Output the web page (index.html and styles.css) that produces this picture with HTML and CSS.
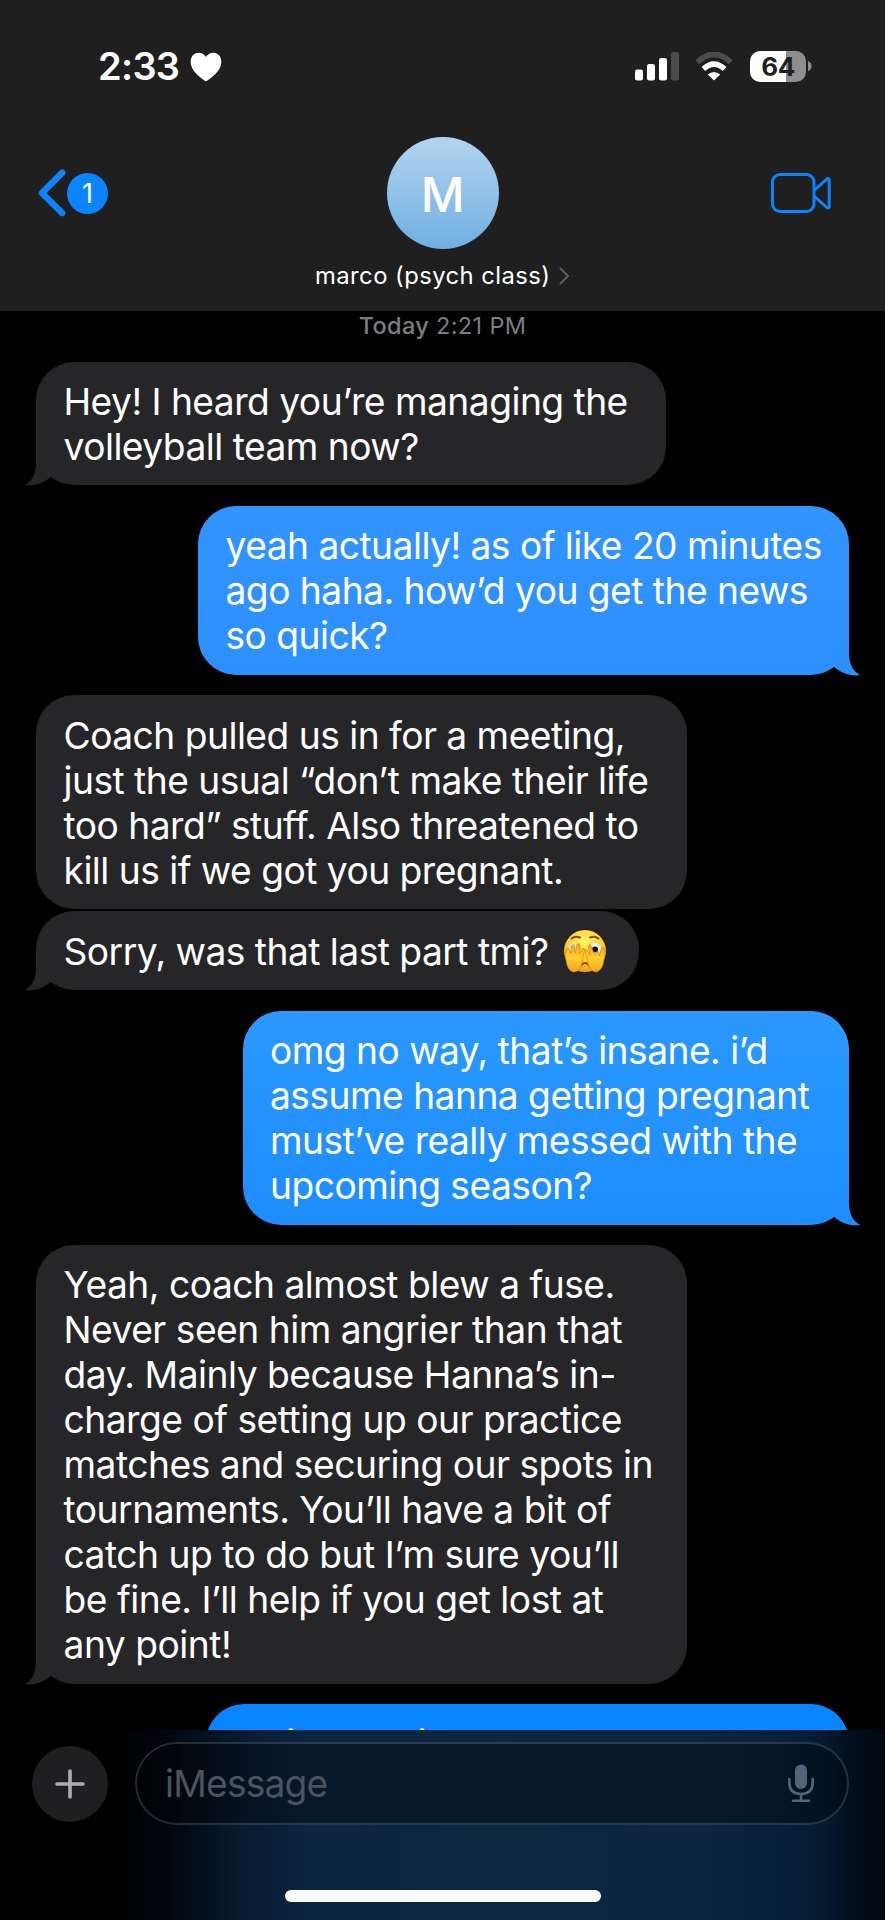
FILE: index.html
```html
<!DOCTYPE html>
<html lang="en">
<head>
<meta charset="utf-8">
<title>Messages</title>
<link rel="stylesheet" href="styles.css">
</head>
<body>
<svg width="0" height="0" class="defs"><symbol id="hook" viewBox="0 0 40 42"><path d="M12 0V18C12 30 7 37 .5 40C10 41.500 20 38.500 27.300 31.500L32 16Z" fill="currentColor"/></symbol></svg>
<div class="phone">
  <header class="header">
    <div class="status">
      <div class="clock"><span class="time">2:33</span>
        <svg width="32" height="30" viewBox="0 0 32 30"><path d="M16 29.500C13 27.200.7 20 .7 10 .7 4.500 4 .8 8.500.8 12 .8 14.700 2.400 16 5 17.300 2.400 20 .8 23.500.8 28 .8 31.300 4.500 31.300 10 31.300 20 19 27.200 16 29.500Z" fill="#fff"/></svg>
      </div>
      <div class="indicators">
        <svg width="44" height="29" viewBox="0 0 44 29"><g fill="#fff"><rect y="17.500" width="8" height="11" rx="2.300"/><rect x="12" y="12" width="8" height="16.500" rx="2.300"/><rect x="24" y="6" width="8" height="22.500" rx="2.300"/></g><rect x="36" width="8" height="28.500" rx="2.300" fill="#4c4c4d"/></svg>
        <svg class="wifi" width="38" height="29" viewBox="0 0 38 29" fill="none"><path d="M2.300 10.200Q19-5.600 35.700 10.200" stroke="#4c4c4d" stroke-width="5.600"/><path d="M8.400 17Q19 7.200 29.600 17" stroke="#fff" stroke-width="5.400"/><path d="M12.800 22.600Q19 17.400 25.200 22.600L19 28.500Z" fill="#fff"/></svg>
        <div class="battery">64</div>
        <svg class="cap" width="4" height="12" viewBox="0 0 4 12"><path d="M0 1Q3.600 2.500 3.600 6T0 11Z" fill="#8e8e8f"/></svg>
      </div>
    </div>
    <div class="nav">
      <div class="back">
        <svg width="28" height="48" viewBox="0 0 28 48" fill="none" stroke="#0a84ff" stroke-width="6.500" stroke-linecap="round" stroke-linejoin="round"><path d="M24.200 3.600 4 24 24.200 44"/></svg>
        <span class="count">1</span>
      </div>
      <div class="avatar">M</div>
      <svg class="video" width="60" height="40" viewBox="0 0 60 40" fill="none" stroke="#0a84ff" stroke-width="3" stroke-linejoin="round"><rect x="1.500" y="1.500" width="41.500" height="37" rx="7.500"/><path d="M43.500 17 55.500 6.300Q58.200 4.200 58.200 7.500V33Q58.200 36.300 55.500 34.200L43.500 23.500"/></svg>
    </div>
    <div class="contact"><span>marco (psych class)</span>
      <svg width="11" height="18" viewBox="0 0 11 18" fill="none" stroke="#5f5f61" stroke-width="2" stroke-linecap="round" stroke-linejoin="round"><path d="M1.500 1.500 9 9 1.500 16.500"/></svg>
    </div>
  </header>

  <main class="thread">
    <div class="stamp"><b>Today</b> 2:21 PM</div>
    <div class="bubble in b1">Hey! I heard you’re managing the<br>volleyball team now?<svg class="hook"><use href="#hook"/></svg></div>
    <div class="bubble out b2">yeah actually! as of like 20 minutes<br>ago haha. how’d you get the news<br>so quick?<svg class="hook"><use href="#hook"/></svg></div>
    <div class="bubble in b3">Coach pulled us in for a meeting,<br>just the usual “don’t make their life<br>too hard” stuff. Also threatened to<br>kill us if we got you pregnant.</div>
    <div class="bubble in b4">Sorry, was that last part tmi?
      <svg class="emoji" width="44" height="44" viewBox="0 0 44 44">
        <defs>
          <radialGradient id="face" cx=".5" cy=".3" r=".75"><stop offset="0" stop-color="#fff36b"/><stop offset=".55" stop-color="#fdd131"/><stop offset="1" stop-color="#f08f12"/></radialGradient>
          <linearGradient id="hand" x2="0" y2="1"><stop offset="0" stop-color="#f2a51e"/><stop offset=".5" stop-color="#ffcf2e"/><stop offset="1" stop-color="#f7a51c"/></linearGradient>
        </defs>
        <circle cx="22" cy="22" r="21" fill="url(#face)"/>
        <path d="M8.500 9.500Q12 6.500 17 8.500M27 8.500Q32 6.500 35.500 9.500" fill="none" stroke="#8a4b0c" stroke-width="2" stroke-linecap="round"/>
        <ellipse cx="10.500" cy="20" rx="5.500" ry="6" fill="#e8e4df"/><ellipse cx="32.500" cy="19.500" rx="6" ry="5.500" fill="#f4f1ec"/>
        <circle cx="32" cy="20.500" r="3" fill="#1d1009"/>
        <path d="M17 37Q22 31 27 37" fill="none" stroke="#8a4b0c" stroke-width="2"/>
        <g stroke="#d98212" stroke-width=".7" fill="url(#hand)">
          <path d="M3 30Q1 24 3.500 20 5.500 18 6.500 21L8 25 8.500 17Q10 14 11.500 17L12.300 24 14 15.500Q16 13 17.200 16.500L16.500 25 19.500 19.500Q21.500 18 21.500 21.500L19 34Q17 43 10.500 43 4 42 3 30Z"/>
          <path d="M41 30Q43 24 41 19 39 17 38.200 20L36.500 27 35.500 23Q34 21 33.500 24L31.500 26 28 17Q26 14 25.500 17.500L27 26 23.500 20.500Q21 20 22.500 24L25 35Q28 43 33.500 43 40 41 41 30Z"/>
        </g>
      </svg><svg class="hook"><use href="#hook"/></svg></div>
    <div class="bubble out b5">omg no way, that’s insane. i’d<br>assume hanna getting pregnant<br>must’ve really messed with the<br>upcoming season?<svg class="hook"><use href="#hook"/></svg></div>
    <div class="bubble in b6">Yeah, coach almost blew a fuse.<br>Never seen him angrier than that<br>day. Mainly because Hanna’s in-<br>charge of setting up our practice<br>matches and securing our spots in<br>tournaments. You’ll have a bit of<br>catch up to do but I’m sure you’ll<br>be fine. I’ll help if you get lost at<br>any point!<svg class="hook"><use href="#hook"/></svg></div>
    <div class="bubble out b7">oh i guess i’ll be okay somehow</div>
  </main>

  <footer class="composer">
    <div class="entry">
      <div class="add"><svg width="30" height="30" viewBox="0 0 30 30" stroke="#adadaf" stroke-width="3.600" stroke-linecap="round"><path d="M15 2V28M2 15H28"/></svg></div>
      <div class="field"><span>iMessage</span>
        <svg width="26" height="39" viewBox="0 0 26 39" fill="none" stroke="#52637a" stroke-width="2.600" stroke-linecap="round"><rect x="7" y=".5" width="12" height="24.500" rx="6" fill="#52637a" stroke="none"/><path d="M1.300 15V18.500Q1.300 30 13 30T24.700 18.500V15M13 30V36.500M5 36.800H21"/></svg>
      </div>
    </div>
    <div class="home"></div>
  </footer>
</div>
</body>
</html>
```
FILE: styles.css
```css
body { margin: 0; background: #000; color: #fff; font-family: Inter, "Liberation Sans", sans-serif; }
svg { display: block; flex: none; }
.defs { position: absolute; }
.phone { width: 885px; height: 1920px; overflow: hidden; display: flex; flex-direction: column; background: #000; }

.header { flex: none; height: 311px; box-sizing: border-box; background: #1f1f1f; padding-top: 44px; }
.status { display: flex; justify-content: space-between; align-items: center; height: 44px; padding: 0 73px 0 98px; }
.clock { display: flex; align-items: center; gap: 10.500px; }
.clock svg { margin-top: 2px; }
.time { font-size: 38px; font-weight: 600; line-height: 44px; letter-spacing: -0.7px; }
.indicators { display: flex; align-items: center; }
.wifi { margin-left: 16px; }
.battery { margin-left: 17px; width: 56px; height: 31px; border-radius: 10px; background: linear-gradient(90deg, #fff 64%, #8e8e8f 64%); color: #1f1f1f; font-size: 26px; font-weight: 700; line-height: 31px; text-align: center; letter-spacing: -0.5px; }
.cap { margin-left: 2px; }
.nav { display: grid; grid-template-columns: 1fr 113px 1fr; align-items: center; padding: 48.500px 54px 0 38px; height: 113px; }
.back { display: flex; align-items: center; gap: 1px; }
.count { width: 41px; height: 41px; border-radius: 50%; background: #0a84ff; font-size: 27px; line-height: 41px; text-align: center; }
.avatar { width: 112.500px; height: 112.500px; border-radius: 50%; background: linear-gradient(#b3d4ef, #6fafe2); font-size: 48px; font-weight: 500; line-height: 115.500px; text-align: center; margin-left: 8.500px; }
.video { justify-self: end; }
.contact { display: flex; justify-content: center; align-items: center; gap: 8.500px; margin-top: 12px; font-size: 23.800px; line-height: 28px; letter-spacing: 0.45px; }

.thread { flex: none; height: 1419px; overflow: hidden; display: flex; flex-direction: column; padding: 0 36px; position: relative; }
.stamp { text-align: center; color: #7c7c81; font-size: 23.500px; line-height: 28px; letter-spacing: 0.35px; margin-top: 1px; margin-bottom: 21.500px; }
.stamp b { font-weight: 500; }
.bubble { flex: none; position: relative; box-sizing: border-box; font-size: 37.200px; line-height: 45px; letter-spacing: -0.53px; padding: 17.700px 0 16.300px 27.500px; white-space: nowrap; border-radius: 38px; margin-bottom: 20.300px; }
.in { align-self: flex-start; background: #262628; color: #262628; }
.out { align-self: flex-end; }
.bubble { -webkit-text-fill-color: #fff; }
.hook { position: absolute; left: -12px; bottom: -2px; width: 40px; height: 42px; }
.out .hook { left: auto; right: -12px; transform: scaleX(-1); }
.b1 { width: 629.500px; }
.b2 { width: 651px; background: linear-gradient(#3294ff, #2d90ff); color: #2d90ff; }
.b3 { width: 650.500px; margin-bottom: 2.200px; }
.b4 { width: 602.700px; display: flex; align-items: center; gap: 14px; }
.b5 { width: 606.500px; background: linear-gradient(#2b98ff, #1d8dff); color: #1d8dff; }
.b6 { width: 650.500px; letter-spacing: -0.5px; }
.b7 { width: 643.500px; background: #0a84ff; padding-top: 16.500px; }

.composer { flex: 1; box-sizing: border-box; padding: 12px 36px 0 32px; background: linear-gradient(90deg, #000 110px, #01060c 165px, #03101c 200px, #081c33 245px, #0b2540 310px, #0c2740 500px, #0b2540 700px, #07213d 780px, #041a30 825px, #02101e 850px, #01070e 885px); }
.entry { display: flex; align-items: center; gap: 27px; }
.add { width: 76px; height: 76px; border-radius: 50%; background: #1f1f21; display: flex; align-items: center; justify-content: center; }
.field { flex: 1; height: 83px; box-sizing: border-box; border: 2px solid rgba(255, 255, 255, 0.15); border-radius: 42px; background: rgba(3, 3, 6, 0.36); display: flex; align-items: center; justify-content: space-between; padding: 0 33px 0 28px; font-size: 37.200px; line-height: 45px; letter-spacing: -0.8px; color: #4b535f; }
.home { width: 316px; height: 12px; border-radius: 6px; background: #fff; margin: 65px 0 0 253px; }
```
